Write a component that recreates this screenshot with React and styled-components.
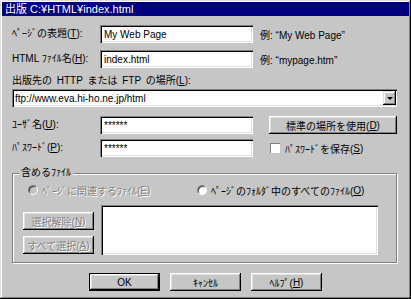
import React from "react";
import styled, { createGlobalStyle } from "styled-components";

const Global = createGlobalStyle`
  html, body { margin: 0; padding: 0; background: #c6c6c6; }
  * { box-sizing: border-box; }
`;

const FONT = `"Liberation Sans", "Noto Sans CJK JP", sans-serif`;

const Window = styled.div`
  width: 411px;
  height: 299px;
  padding: 2px;
  background: #c6c6c6;
  font-family: ${FONT};
  font-size: 10px;
  color: #000;
  box-shadow: inset -1px -1px #000, inset 1px 1px #dfdfdf,
    inset -2px -2px #808080, inset 2px 2px #fff;
  display: flex;
  flex-direction: column;
`;

const TitleBar = styled.div`
  height: 14px;
  background: #000080;
  color: #fff;
  font-size: 11px;
  line-height: 14px;
  padding-left: 3px;
  white-space: nowrap;
`;

const Body = styled.div`
  padding: 9px 12px 0 10px;
  display: flex;
  flex-direction: column;
`;

const Row = styled.div`
  display: grid;
  grid-template-columns: 88px 153px 1fr;
  align-items: center;
  height: ${(p) => p.$h || 18}px;
  margin-top: ${(p) => p.$mt || 0}px;
`;

const Label = styled.span`
  white-space: nowrap;
  line-height: 14px;
`;

const Field = styled.div`
  height: 100%;
  background: #fff;
  box-shadow: inset 1px 1px #808080, inset 2px 2px #000,
    inset -1px -1px #fff, inset -2px -2px #dfdfdf;
  padding: 0 4px;
  display: flex;
  align-items: center;
  white-space: nowrap;
  overflow: hidden;
`;

const Side = styled.div`
  margin-left: ${(p) => p.$ml}px;
  display: flex;
  align-items: center;
  white-space: nowrap;
`;

const BlockLabel = styled.div`
  margin-top: 6px;
  line-height: 14px;
  white-space: nowrap;
  word-spacing: 2px;
`;

const Combo = styled.div`
  margin-top: 1px;
  height: 18px;
  display: flex;
  background: #fff;
  box-shadow: inset 1px 1px #808080, inset 2px 2px #000,
    inset -1px -1px #fff, inset -2px -2px #dfdfdf;
  padding: 2px 1px 2px 2px;
`;

const ComboText = styled.div`
  flex: 1;
  display: flex;
  align-items: center;
  padding-left: 1px;
  white-space: nowrap;
`;

const DropButton = styled.div`
  width: 13px;
  background: #c6c6c6;
  box-shadow: inset -1px -1px #000, inset 1px 1px #dfdfdf,
    inset -2px -2px #808080, inset 2px 2px #fff;
  display: flex;
  align-items: center;
  justify-content: center;
`;

const Arrow = styled.div`
  width: 0;
  height: 0;
  border-left: 3px solid transparent;
  border-right: 3px solid transparent;
  border-top: 3px solid #000;
`;

const Button = styled.div`
  width: ${(p) => p.$w || 71}px;
  height: ${(p) => p.$h || 18}px;
  background: #c6c6c6;
  display: flex;
  align-items: center;
  justify-content: center;
  white-space: nowrap;
  color: ${(p) => (p.$disabled ? "#808080" : "#000")};
  text-shadow: ${(p) => (p.$disabled ? "1px 1px #fff" : "none")};
  box-shadow: ${(p) =>
    p.$default
      ? "inset 0 0 0 1px #000, inset -2px -2px #000, inset 2px 2px #fff, inset -3px -3px #808080, inset 3px 3px #dfdfdf"
      : "inset -1px -1px #000, inset 1px 1px #fff, inset -2px -2px #808080, inset 2px 2px #dfdfdf"};
`;

const Check = styled.span`
  width: 10px;
  height: 10px;
  background: #fff;
  box-shadow: inset 1px 1px #808080, inset -1px -1px #fff;
  margin-right: 5px;
  flex: none;
`;

const Group = styled.div`
  margin-top: 16px;
  height: 90px;
  position: relative;
  border: 1px solid #808080;
  box-shadow: inset 1px 1px #fff, 1px 1px #fff;
  padding: 10px 18px 0 10px;
  display: flex;
  flex-direction: column;
`;

const Legend = styled.span`
  position: absolute;
  top: -8px;
  left: 6px;
  padding: 0 2px;
  background: #c6c6c6;
  line-height: 14px;
`;

const RadioRow = styled.div`
  display: flex;
  align-items: center;
  height: 12px;
`;

const RadioItem = styled.div`
  display: flex;
  align-items: center;
  flex: none;
  width: ${(p) => (p.$w ? `${p.$w}px` : "auto")};
  margin-left: ${(p) => p.$ml || 0}px;
  white-space: nowrap;
  color: ${(p) => (p.$disabled ? "#808080" : "#000")};
  text-shadow: ${(p) => (p.$disabled ? "1px 1px #fff" : "none")};
`;

const Radio = styled.span`
  width: 10px;
  height: 10px;
  border-radius: 50%;
  flex: none;
  margin-right: 4px;
  background: ${(p) => (p.$disabled ? "#c6c6c6" : "#fff")};
  border: 1px solid;
  border-color: #808080 #fff #fff #808080;
  box-shadow: inset 1px 1px #404040;
`;

const Lower = styled.div`
  margin-top: 9px;
  display: flex;
  gap: 7px;
`;

const ButtonCol = styled.div`
  padding-top: 7px;
  display: flex;
  flex-direction: column;
  gap: 6px;
`;

const ListBox = styled.div`
  width: 278px;
  height: 50px;
  background: #fff;
  box-shadow: inset 1px 1px #808080, inset 2px 2px #000,
    inset -1px -1px #fff, inset -2px -2px #dfdfdf;
`;

const Footer = styled.div`
  margin-top: 10px;
  display: flex;
  justify-content: center;
  gap: 10px;
  padding-left: 2px;
`;

const U = styled.u`
  text-decoration: underline;
  text-underline-offset: 1px;
`;

export default function App() {
  return (
    <>
      <Global />
      <Window>
        <TitleBar>出版 C:¥HTML¥index.html</TitleBar>
        <Body>
          <Row>
            <Label>
              ﾍﾟｰｼﾞの表題(<U>T</U>):
            </Label>
            <Field>My Web Page</Field>
            <Side $ml={7}>例: “My Web Page”</Side>
          </Row>
          <Row $mt={7}>
            <Label>
              HTML ﾌｧｲﾙ名(<U>H</U>):
            </Label>
            <Field>index.html</Field>
            <Side $ml={7}>例: “mypage.htm”</Side>
          </Row>
          <BlockLabel>
            出版先の HTTP または FTP の場所(<U>L</U>):
          </BlockLabel>
          <Combo>
            <ComboText>ftp://www.eva.hi-ho.ne.jp/html</ComboText>
            <DropButton>
              <Arrow />
            </DropButton>
          </Combo>
          <Row $mt={9} $h={18}>
            <Label>
              ﾕｰｻﾞ名(<U>U</U>):
            </Label>
            <Field>******</Field>
            <Side $ml={16}>
              <Button $w={128} $h={18}>
                標準の場所を使用(<U>D</U>)
              </Button>
            </Side>
          </Row>
          <Row $mt={5} $h={18}>
            <Label>
              ﾊﾟｽﾜｰﾄﾞ(<U>P</U>):
            </Label>
            <Field>******</Field>
            <Side $ml={17}>
              <Check />
              ﾊﾟｽﾜｰﾄﾞを保存(<U>S</U>)
            </Side>
          </Row>
          <Group>
            <Legend>含めるﾌｧｲﾙ</Legend>
            <RadioRow>
              <RadioItem $w={169} $ml={5} $disabled>
                <Radio $disabled />
                ﾍﾟｰｼﾞに関連するﾌｧｲﾙ(<U>E</U>)
              </RadioItem>
              <RadioItem>
                <Radio />
                ﾍﾟｰｼﾞのﾌｫﾙﾀﾞ中のすべてのﾌｧｲﾙ(<U>O</U>)
              </RadioItem>
            </RadioRow>
            <Lower>
              <ButtonCol>
                <Button $disabled>
                  選択解除(<U>N</U>)
                </Button>
                <Button $disabled>
                  すべて選択(<U>A</U>)
                </Button>
              </ButtonCol>
              <ListBox />
            </Lower>
          </Group>
          <Footer>
            <Button $default>OK</Button>
            <Button>ｷｬﾝｾﾙ</Button>
            <Button>
              ﾍﾙﾌﾟ(<U>H</U>)
            </Button>
          </Footer>
        </Body>
      </Window>
    </>
  );
}
